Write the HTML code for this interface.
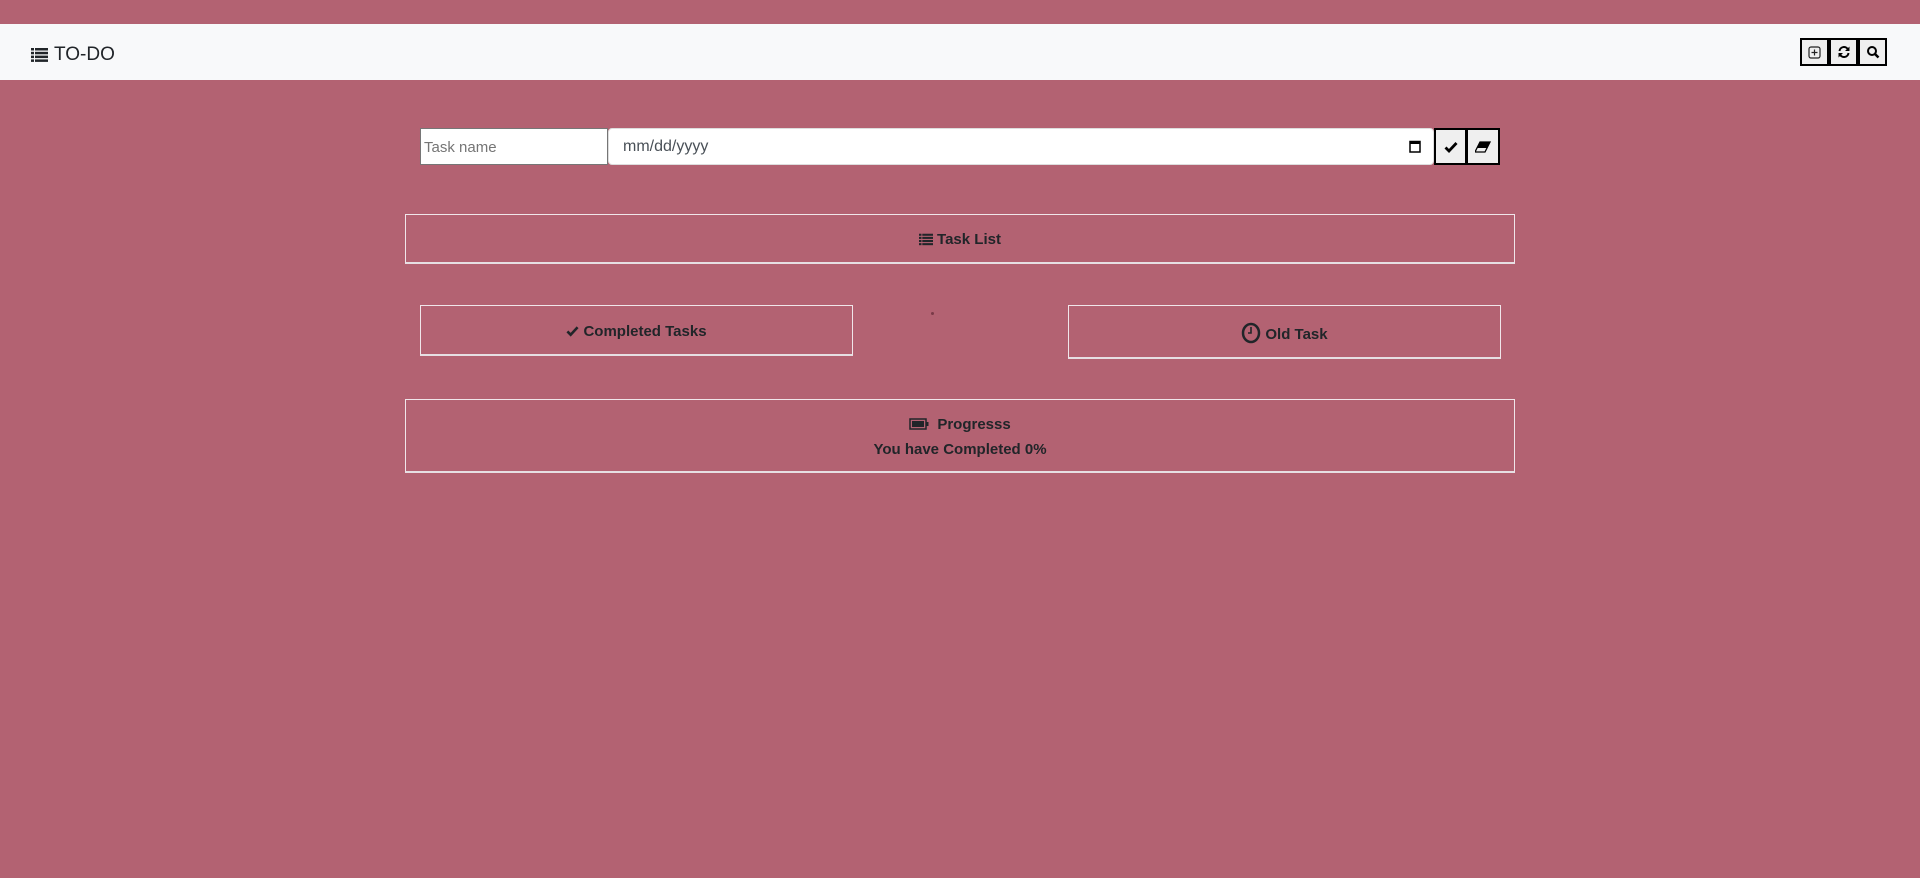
<!DOCTYPE html>
<html><head><meta charset="utf-8"><style>
*{box-sizing:border-box;margin:0;padding:0}
body{width:1920px;height:878px;background:#b36272;font-family:"Liberation Sans",sans-serif;color:#212529;position:relative;overflow:hidden}
.nav{position:absolute;left:0;top:24px;width:1920px;height:56px;background:#f8f9fa}
.brand{position:absolute;left:31px;top:20px;font-size:19px;display:flex;align-items:center;gap:6px;color:#212529}
.nb{position:absolute;top:14px;width:29px;height:28px;border:2px solid #000;background:#efefef;display:flex;align-items:center;justify-content:center}
.in{position:absolute;top:128px;height:37px;background:#fff}
.box{position:absolute;border:1px solid #f0e6ea;border-bottom:2px solid #e6dfe3;display:flex;flex-direction:column;align-items:center;justify-content:center;font-weight:bold;font-size:15px;padding-top:2px}
</style></head><body>
<div class="nav">
 <div class="brand"><svg width="17" height="14" viewBox="0 0 17 14"><g fill="#212529"><rect x="0" y="0" width="3" height="2.5"/><rect x="4" y="0" width="13" height="2.5"/><rect x="0" y="3.8" width="3" height="2.5"/><rect x="4" y="3.8" width="13" height="2.5"/><rect x="0" y="7.6" width="3" height="2.5"/><rect x="4" y="7.6" width="13" height="2.5"/><rect x="0" y="11.4" width="3" height="2.5"/><rect x="4" y="11.4" width="13" height="2.5"/></g></svg>TO-DO</div>
 <div class="nb" style="left:1800px"><svg width="13" height="13" viewBox="0 0 13 13"><rect x="1" y="1" width="11" height="11" rx="2" fill="none" stroke="#222" stroke-width="1.2"/><path d="M6.5 3.5v6M3.5 6.5h6" stroke="#222" stroke-width="1.2"/></svg></div>
 <div class="nb" style="left:1829px"><svg width="14" height="14" viewBox="0 0 14 14"><path d="M2.5 6A4.5 4.5 0 0 1 11 4.5M11.5 8A4.5 4.5 0 0 1 3 9.5" fill="none" stroke="#000" stroke-width="2"/><path d="M12.5 1.5v4.5h-4.5zM1.5 12.5v-4.5h4.5z" fill="#000"/></svg></div>
 <div class="nb" style="left:1858px"><svg width="14" height="14" viewBox="0 0 14 14"><circle cx="6" cy="6" r="4" fill="none" stroke="#000" stroke-width="2"/><path d="M9 9l3.5 3.5" stroke="#000" stroke-width="2.5"/></svg></div>
</div>
<div class="in" style="left:420px;width:188px;border:1px solid #767676;font-size:15px;color:#757575;padding:10px 3px">Task name</div>
<div class="in" style="left:608px;width:826px;border:1px solid #ddd;border-radius:4px;font-size:16px;color:#495057;padding:9px 14px">mm/dd/yyyy
 <svg style="position:absolute;right:12px;top:11px" width="12" height="13" viewBox="0 0 12 13"><rect x="1" y="1.5" width="10" height="10.5" fill="none" stroke="#000" stroke-width="1.5"/><rect x="1" y="1.5" width="10" height="2.5" fill="#000"/></svg></div>
<div class="in" style="left:1434px;width:33px;border:2px solid #000;background:#efefef;display:flex;align-items:center;justify-content:center"><svg width="14" height="12" viewBox="0 0 14 12"><path d="M1.5 6.5l3.5 3.5 7.5-8" fill="none" stroke="#000" stroke-width="2.8"/></svg></div>
<div class="in" style="left:1466px;width:34px;border:2px solid #000;background:#efefef;display:flex;align-items:center;justify-content:center"><svg width="16" height="12" viewBox="0 0 16 12"><path d="M5 1h10l-5 10H0z" fill="none" stroke="#000" stroke-width="1.3"/><path d="M5 1h10l-3 6H2z" fill="#000"/></svg></div>
<div class="box" style="left:405px;top:214px;width:1110px;height:50px"><div style="display:flex;align-items:center;gap:4px"><svg width="14" height="13" viewBox="0 0 17 14"><g fill="#212529"><rect x="0" y="0" width="3" height="2.5"/><rect x="4" y="0" width="13" height="2.5"/><rect x="0" y="3.8" width="3" height="2.5"/><rect x="4" y="3.8" width="13" height="2.5"/><rect x="0" y="7.6" width="3" height="2.5"/><rect x="4" y="7.6" width="13" height="2.5"/><rect x="0" y="11.4" width="3" height="2.5"/><rect x="4" y="11.4" width="13" height="2.5"/></g></svg>Task List</div></div>
<div class="box" style="left:420px;top:305px;width:433px;height:51px"><div style="display:flex;align-items:center;gap:4px"><svg width="13" height="12" viewBox="0 0 14 12"><path d="M1.5 6.5l3.5 3.5 7.5-8" fill="none" stroke="#212529" stroke-width="2.8"/></svg>Completed Tasks</div></div>
<div style="position:absolute;left:931px;top:312px;width:3px;height:3px;background:#7a3a48;border-radius:50%"></div>
<div class="box" style="left:1068px;top:305px;width:433px;height:54px"><div style="display:flex;align-items:center;gap:4px"><svg width="20" height="22" viewBox="0 0 20 22"><ellipse cx="10" cy="11" rx="8" ry="9" fill="none" stroke="#212529" stroke-width="2.5"/><path d="M10 5v6H7" fill="none" stroke="#212529" stroke-width="1.6"/></svg><span style="margin-top:4px">Old Task</span></div></div>
<div class="box" style="left:405px;top:399px;width:1110px;height:74px;gap:8px"><div style="display:flex;align-items:center;gap:8px"><svg width="20" height="12" viewBox="0 0 20 12"><rect x="1" y="1" width="16" height="10" fill="none" stroke="#212529" stroke-width="1.5"/><rect x="3" y="3" width="12" height="6" fill="#212529"/><rect x="17.5" y="4" width="2" height="4" fill="#212529"/></svg>Progresss</div><div>You have Completed 0%</div></div>
</body></html>
